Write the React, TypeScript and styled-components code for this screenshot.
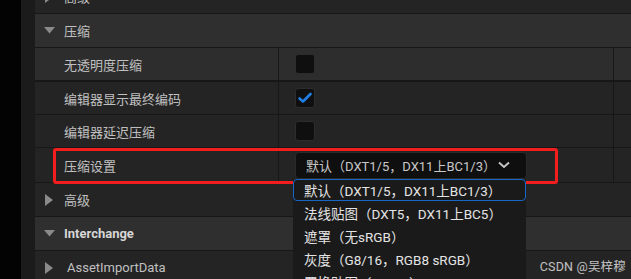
import styled, { createGlobalStyle } from 'styled-components';

const GlobalStyle = createGlobalStyle`
  html, body {
    margin: 0;
    padding: 0;
    background: #000;
    overflow: hidden;
  }
  body {
    font-family: Roboto, 'Noto Sans CJK SC', sans-serif;
    font-size: 13px;
    color: #c0c0c0;
  }
`;

const options = [
  '默认（DXT1/5，DX11上BC1/3）',
  '法线贴图（DXT5，DX11上BC5）',
  '遮罩（无sRGB）',
  '灰度（G8/16，RGB8 sRGB）',
  '置换贴图（G8/16）',
];

function TriangleDown() {
  return (
    <svg width="11" height="7" viewBox="0 0 11 7">
      <path d="M0 0 H11 L5.5 6.5 Z" fill="#8a8a8a" />
    </svg>
  );
}

function TriangleRight() {
  return (
    <svg width="8" height="12" viewBox="0 0 8 12">
      <path d="M0 0 L8 6 L0 12 Z" fill="#8a8a8a" />
    </svg>
  );
}

function Check() {
  return (
    <svg width="14" height="12" viewBox="0 0 14 12">
      <path d="M1.5 6.5 L5 9.5 L12.5 2" fill="none" stroke="#1f7fe5" strokeWidth="2.6" strokeLinecap="round" strokeLinejoin="round" />
    </svg>
  );
}

function Chevron() {
  return (
    <svg width="12" height="8" viewBox="0 0 12 8">
      <path d="M1 1.5 L6 6 L11 1.5" fill="none" stroke="#c8c8c8" strokeWidth="1.8" />
    </svg>
  );
}

function App() {
  return (
    <>
      <GlobalStyle />
      <Page>
        <Gutter />
        <Strip />
        <Panel>
          <Scroller>
            <Category $shade="#242424">
              <Arrow>
                <TriangleRight />
              </Arrow>
              <span>高级</span>
            </Category>
            <Category>
              <Arrow>
                <TriangleDown />
              </Arrow>
              <span>压缩</span>
            </Category>
            <Row $hover>
              <Name>无透明度压缩</Name>
              <Value>
                <Box />
              </Value>
              <Extra />
            </Row>
            <Row $thick>
              <Name>编辑器显示最终编码</Name>
              <Value>
                <Box>
                  <Check />
                </Box>
              </Value>
              <Extra />
            </Row>
            <Row>
              <Name>编辑器延迟压缩</Name>
              <Value>
                <Box />
              </Value>
              <Extra />
            </Row>
            <Row $tall>
              <Name>压缩设置</Name>
              <Value>
                <Combo>
                  <span>{options[0]}</span>
                  <Chevron />
                </Combo>
              </Value>
              <Extra />
            </Row>
            <Category $shade="#242424">
              <Arrow>
                <TriangleRight />
              </Arrow>
              <span>高级</span>
            </Category>
            <Category $bold>
              <Arrow>
                <TriangleDown />
              </Arrow>
              <span>Interchange</span>
            </Category>
            <Category $shade="#242424">
              <Arrow>
                <TriangleRight />
              </Arrow>
              <SubTitle>AssetImportData</SubTitle>
            </Category>
          </Scroller>
        </Panel>
        <Highlight />
        <Menu>
          {options.map((o, i) => (
            <MenuItem key={o} $active={i === 0}>
              {o}
            </MenuItem>
          ))}
        </Menu>
        <Watermark>CSDN @吴梓穆</Watermark>
      </Page>
    </>
  );
}

const Page = styled.div`
  position: relative;
  display: flex;
  width: 631px;
  height: 279px;
  overflow: hidden;
  background: #000;
`;

const Gutter = styled.div`
  width: 21px;
  flex-shrink: 0;
  background: #030303;
`;

const Strip = styled.div`
  width: 14px;
  flex-shrink: 0;
  background: #1b1b1b;
`;

const Panel = styled.div`
  flex: 1;
  overflow: hidden;
  background: #242424;
`;

const Scroller = styled.div`
  display: flex;
  flex-direction: column;
  margin-top: -20px;
`;

const Category = styled.div<{ $shade?: string; $bold?: boolean }>`
  display: flex;
  align-items: center;
  height: 33px;
  flex-shrink: 0;
  padding-left: 8px;
  background: ${(p) => p.$shade || '#2f2f2f'};
  border-bottom: 1px solid #171717;
  color: ${(p) => (p.$bold ? '#d6d6d6' : '#c0c0c0')};
  font-weight: ${(p) => (p.$bold ? 700 : 400)};
  font-size: 13px;
`;

const Arrow = styled.div`
  width: 12px;
  margin-right: 9px;
  display: flex;
  align-items: center;
  justify-content: center;
`;

const SubTitle = styled.span`
  margin-left: 3px;
`;

const Row = styled.div<{ $hover?: boolean; $thick?: boolean; $tall?: boolean }>`
  display: flex;
  height: ${(p) => (p.$tall ? 34 : 32)}px;
  flex-shrink: 0;
  background: ${(p) => (p.$hover ? '#2d2d2d' : '#242424')};
  border-bottom: 1px solid #171717;
  border-top: ${(p) => (p.$thick ? '1px solid #171717' : 'none')};
`;

const Name = styled.div`
  width: 214px;
  flex-shrink: 0;
  display: flex;
  align-items: center;
  padding-left: 29px;
  border-right: 1px solid #171717;
  color: #c0c0c0;
`;

const Value = styled.div`
  width: 335px;
  flex-shrink: 0;
  display: flex;
  align-items: center;
  padding-left: 16px;
  box-sizing: border-box;
  border-right: 1px solid #171717;
`;

const Extra = styled.div`
  flex: 1;
`;

const Box = styled.div`
  width: 20px;
  height: 20px;
  box-sizing: border-box;
  border: 1px solid #2c2c2c;
  border-radius: 3px;
  background: #0f0f0f;
  display: flex;
  align-items: center;
  justify-content: center;
`;

const Combo = styled.div`
  width: 232px;
  height: 27px;
  box-sizing: border-box;
  display: flex;
  align-items: center;
  justify-content: space-between;
  padding: 0 16px 0 10px;
  background: #0f0f0f;
  border: 1px solid #2a2a2a;
  border-radius: 4px;
  color: #c8c8c8;
`;

const Highlight = styled.div`
  position: absolute;
  left: 53px;
  top: 148px;
  width: 505px;
  height: 36px;
  box-sizing: border-box;
  border: 3px solid #f21d1d;
  border-radius: 3px;
  pointer-events: none;
`;

const Menu = styled.div`
  position: absolute;
  left: 293px;
  top: 179px;
  width: 233px;
  height: 110px;
  background: #1a1a1a;
  display: flex;
  flex-direction: column;
  gap: 1px;
`;

const MenuItem = styled.div<{ $active?: boolean }>`
  height: 22px;
  box-sizing: border-box;
  display: flex;
  align-items: center;
  padding-left: 10px;
  color: #e4e4e4;
  font-size: 13.5px;
  border: 1px solid ${(p) => (p.$active ? '#1668c4' : 'transparent')};
  border-radius: 4px;
  white-space: nowrap;
`;

const Watermark = styled.div`
  position: absolute;
  right: 5px;
  bottom: 4px;
  font-size: 12.5px;
  color: rgba(225, 225, 225, 0.85);
  letter-spacing: 0.2px;
`;

export default App;
